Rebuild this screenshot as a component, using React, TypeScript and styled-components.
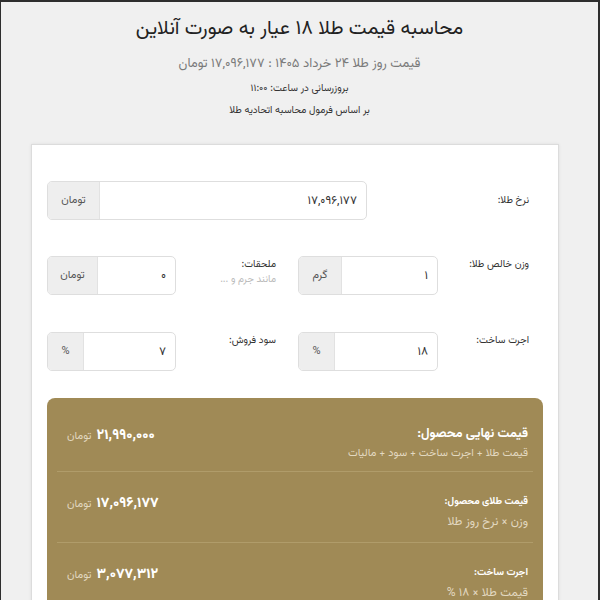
import React from 'react';
import styled, { createGlobalStyle } from 'styled-components';

const GlobalStyle = createGlobalStyle`
  html, body {
    margin: 0;
    padding: 0;
    background: #f0f0f0;
  }
  body {
    font-family: "Vazirmatn", "Noto Sans Arabic", "DejaVu Sans", sans-serif;
    color: #333;
  }
  * {
    box-sizing: border-box;
  }
`;

const App = () => {
  return (
    <Frame>
      <GlobalStyle />
      <Header>
        <Title>محاسبه قیمت طلا ۱۸ عیار به صورت آنلاین</Title>
        <Subtitle>قیمت روز طلا ۲۴ خرداد ۱۴۰۵ : ۱۷,۰۹۶,۱۷۷ تومان</Subtitle>
        <Note>بروزرسانی در ساعت: ۱۱:۰۰</Note>
        <Note>بر اساس فرمول محاسبه اتحادیه طلا</Note>
      </Header>
      <Card>
        <WideRow>
          <Label center>نرخ طلا:</Label>
          <InputGroup>
            <Value>۱۷,۰۹۶,۱۷۷</Value>
            <Addon width={52}>تومان</Addon>
          </InputGroup>
        </WideRow>

        <HalfRow>
          <Label>وزن خالص طلا:</Label>
          <InputGroup>
            <Value>۱</Value>
            <Addon width={43}>گرم</Addon>
          </InputGroup>
          <Label indent>
            ملحقات:
            <Hint>مانند جرم و ...</Hint>
          </Label>
          <InputGroup>
            <Value>۰</Value>
            <Addon width={50}>تومان</Addon>
          </InputGroup>
        </HalfRow>

        <HalfRow>
          <Label>اجرت ساخت:</Label>
          <InputGroup>
            <Value>۱۸</Value>
            <Addon width={36}>%</Addon>
          </InputGroup>
          <Label indent>سود فروش:</Label>
          <InputGroup>
            <Value>۷</Value>
            <Addon width={36}>%</Addon>
          </InputGroup>
        </HalfRow>

        <ResultBox>
          <ResultRow first>
            <ResultText>
              <ResultLabel big>قیمت نهایی محصول:</ResultLabel>
              <ResultHint>قیمت طلا + اجرت ساخت + سود + مالیات</ResultHint>
            </ResultText>
            <Amount>
              <AmountNumber>۲۱,۹۹۰,۰۰۰</AmountNumber>
              <Unit>تومان</Unit>
            </Amount>
          </ResultRow>
          <ResultRow>
            <ResultText>
              <ResultLabel>قیمت طلای محصول:</ResultLabel>
              <ResultHint large>وزن × نرخ روز طلا</ResultHint>
            </ResultText>
            <Amount>
              <AmountNumber>۱۷,۰۹۶,۱۷۷</AmountNumber>
              <Unit>تومان</Unit>
            </Amount>
          </ResultRow>
          <ResultRow>
            <ResultText>
              <ResultLabel>اجرت ساخت:</ResultLabel>
              <ResultHint large>قیمت طلا × ۱۸ %</ResultHint>
            </ResultText>
            <Amount>
              <AmountNumber>۳,۰۷۷,۳۱۲</AmountNumber>
              <Unit>تومان</Unit>
            </Amount>
          </ResultRow>
        </ResultBox>
      </Card>
    </Frame>
  );
};

export default App;

const Frame = styled.div`
  direction: rtl;
  height: 100vh;
  overflow: hidden;
  border: 2px solid #2e2e2e;
  border-bottom: none;
  border-left-width: 1px;
  background: #f0f0f0;
`;

const Header = styled.header`
  display: flex;
  flex-direction: column;
  align-items: center;
  padding-top: 12px;
  height: 142px;
`;

const Title = styled.h1`
  margin: 0;
  font-size: 20px;
  font-weight: 400;
  color: #222;
  line-height: 30px;
`;

const Subtitle = styled.p`
  margin: 9px 0 0;
  font-size: 13px;
  color: #7a7a7a;
  line-height: 22px;
`;

const Note = styled.p`
  margin: 6px 0 0;
  font-size: 10px;
  color: #333;
  line-height: 16px;

  & + & {
    margin-top: 6px;
  }
`;

const Card = styled.main`
  margin: 0 39px 0 30px;
  background: #fff;
  border: 1px solid #dcdcdc;
  box-shadow: 0 0 3px rgba(0, 0, 0, 0.08);
  padding: 36px 15px 0;
  min-height: 500px;
`;

const WideRow = styled.div`
  display: grid;
  grid-template-columns: 176px 1fr;
  align-items: center;
  margin-bottom: 36px;
`;

const HalfRow = styled.div`
  display: grid;
  grid-template-columns: 105px 140px 122px 1fr;
  align-items: start;
  margin-bottom: 37px;
`;

const Label = styled.label<{ center?: boolean; indent?: boolean }>`
  display: flex;
  flex-direction: column;
  font-size: 10px;
  color: #333;
  padding-top: ${(p) => (p.center ? '0' : '1px')};
  padding-right: ${(p) => (p.indent ? '22px' : '14px')};
  line-height: 16px;
`;

const Hint = styled.span`
  font-size: 10px;
  color: #bbb;
  line-height: 14px;
`;

const InputGroup = styled.div`
  display: flex;
  height: 39px;
  border: 1px solid #dedede;
  border-radius: 5px;
  overflow: hidden;
  background: #fff;
`;

const Value = styled.div`
  flex: 1;
  display: flex;
  align-items: center;
  padding: 0 9px;
  font-size: 12px;
  color: #333;
`;

const Addon = styled.div<{ width: number }>`
  width: ${(p) => p.width}px;
  display: flex;
  align-items: center;
  justify-content: center;
  background: #eee;
  border-right: 1px solid #e2e2e2;
  font-size: 11px;
  color: #555;
`;

const ResultBox = styled.section`
  margin-top: -10px;
  background: #a08a56;
  border-radius: 8px;
  padding: 0 10px;
`;

const ResultRow = styled.div<{ first?: boolean }>`
  display: flex;
  justify-content: space-between;
  align-items: flex-start;
  padding: ${(p) => (p.first ? '26px 5px 8px' : '20px 5px 11px')};
  border-bottom: 1px solid #b09c6a;

  &:last-child {
    border-bottom: none;
  }
`;

const ResultText = styled.div`
  display: flex;
  flex-direction: column;
  gap: 1px;
`;

const ResultLabel = styled.span<{ big?: boolean }>`
  font-size: ${(p) => (p.big ? '13px' : '10px')};
  font-weight: 700;
  color: #fff;
  line-height: 20px;
`;

const ResultHint = styled.span<{ large?: boolean }>`
  font-size: ${(p) => (p.large ? '12px' : '11px')};
  color: #e2d8c0;
  line-height: 18px;
`;

const Amount = styled.div`
  display: flex;
  align-items: baseline;
  gap: 5px;
  padding-left: 5px;
  padding-top: 1px;
`;

const AmountNumber = styled.span`
  font-size: 14px;
  font-weight: 800;
  color: #fff;
`;

const Unit = styled.span`
  font-size: 11px;
  color: #e2d8c0;
`;
